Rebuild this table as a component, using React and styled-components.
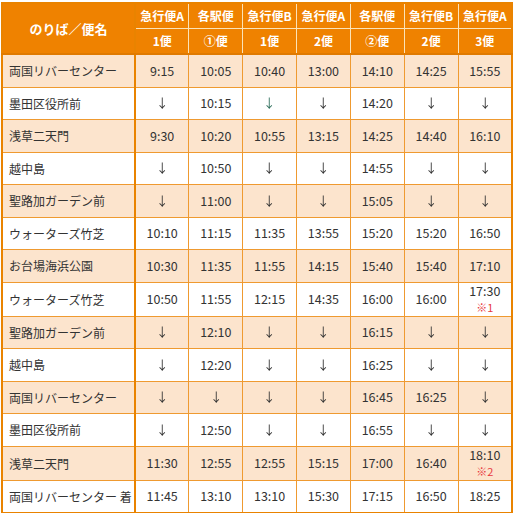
import React from 'react';
import styled, { createGlobalStyle } from 'styled-components';

const GlobalStyle = createGlobalStyle`
  body {
    margin: 0;
    padding: 2px 0 0 1px;
    background: #ffffff;
    font-family: "Noto Sans CJK JP", "Noto Sans", sans-serif;
    color: #333333;
  }
`;

// TABLE
const Table = styled.table`
  width: 512px;
  table-layout: fixed;
  border-collapse: collapse;
  border: 2px solid #e98300;
  font-size: 12.5px;
`;

// HEADER CELLS
const HeadCell = styled.th`
  background: #ef8200;
  color: #ffffff;
  font-weight: 700;
  font-size: 12px;
  height: 24px;
  line-height: 16px;
  padding: 0;
  text-align: center;
  border-left: 1px solid #fbe3b8;
  border-bottom: ${(p) => (p.$last ? '2px solid #e07a00' : '1px solid #fbe3b8')};
`;

const CornerCell = styled(HeadCell)`
  font-size: 13px;
  border-left: none;
  border-right: 2px solid #e98300;
  border-bottom: 2px solid #e07a00;
`;

// BODY ROWS
const Row = styled.tr`
  background: ${(p) => (p.$alt ? '#fce4cd' : '#ffffff')};
`;

const NameCell = styled.td`
  height: 31.5px;
  padding: 0 0 0 6px;
  font-size: 12px;
  text-align: left;
  white-space: nowrap;
  border-right: 2px solid #e98300;
  border-bottom: 1px solid #ef9a30;
`;

const Cell = styled.td`
  padding: 0;
  text-align: center;
  line-height: 16px;
  border-left: 1px solid #ef9a30;
  border-bottom: 1px solid #ef9a30;
`;

// the down arrow, kept on its own layer so it is drawn in plain grey tones
const Arrow = styled.span`
  display: inline-block;
  will-change: transform;
  color: ${(p) => (p.$green ? '#2f6f5c' : '#333333')};
`;

const Note = styled.span`
  display: block;
  color: #e8383d;
  font-size: 11px;
  line-height: 17px;
`;

const services = [
  ['急行便A', '1便'],
  ['各駅便', '①便'],
  ['急行便B', '1便'],
  ['急行便A', '2便'],
  ['各駅便', '②便'],
  ['急行便B', '2便'],
  ['急行便A', '3便'],
];

const D = '↓';

const rows = [
  ['両国リバーセンター', '9:15', '10:05', '10:40', '13:00', '14:10', '14:25', '15:55'],
  ['墨田区役所前', D, '10:15', 'G', D, '14:20', D, D],
  ['浅草二天門', '9:30', '10:20', '10:55', '13:15', '14:25', '14:40', '16:10'],
  ['越中島', D, '10:50', D, D, '14:55', D, D],
  ['聖路加ガーデン前', D, '11:00', D, D, '15:05', D, D],
  ['ウォーターズ竹芝', '10:10', '11:15', '11:35', '13:55', '15:20', '15:20', '16:50'],
  ['お台場海浜公園', '10:30', '11:35', '11:55', '14:15', '15:40', '15:40', '17:10'],
  ['ウォーターズ竹芝', '10:50', '11:55', '12:15', '14:35', '16:00', '16:00', '17:30|※1'],
  ['聖路加ガーデン前', D, '12:10', D, D, '16:15', D, D],
  ['越中島', D, '12:20', D, D, '16:25', D, D],
  ['両国リバーセンター', D, D, D, D, '16:45', '16:25', D],
  ['墨田区役所前', D, '12:50', D, D, '16:55', D, D],
  ['浅草二天門', '11:30', '12:55', '12:55', '15:15', '17:00', '16:40', '18:10|※2'],
  ['両国リバーセンター 着', '11:45', '13:10', '13:10', '15:30', '17:15', '16:50', '18:25'],
];

function TimeCell({ value }) {
  // 'G' = arrow printed in green in the original timetable
  if (value === D || value === 'G') {
    return (
      <Cell>
        <Arrow $green={value === 'G'}>{D}</Arrow>
      </Cell>
    );
  }
  const [time, note] = value.split('|');
  return (
    <Cell>
      {time}
      {note && <Note>{note}</Note>}
    </Cell>
  );
}

export default function App() {
  return (
    <>
      <GlobalStyle />
      <Table>
        <colgroup>
          <col style={{ width: 133 }} />
          {services.map((_, i) => (
            <col key={i} />
          ))}
        </colgroup>
        <thead>
          <tr>
            <CornerCell rowSpan={2}>のりば／便名</CornerCell>
            {services.map(([kind], i) => (
              <HeadCell key={i}>{kind}</HeadCell>
            ))}
          </tr>
          <tr>
            {services.map(([, no], i) => (
              <HeadCell key={i} $last>{no}</HeadCell>
            ))}
          </tr>
        </thead>
        <tbody>
          {rows.map(([name, ...times], r) => (
            <Row key={r} $alt={r % 2 === 0}>
              <NameCell>{name}</NameCell>
              {times.map((t, c) => (
                <TimeCell key={c} value={t} />
              ))}
            </Row>
          ))}
        </tbody>
      </Table>
    </>
  );
}
